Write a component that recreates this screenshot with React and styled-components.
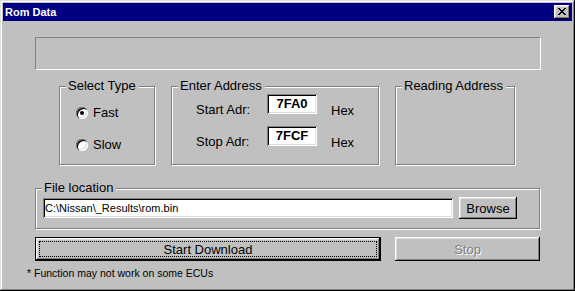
import React from "react";
import styled, { createGlobalStyle } from "styled-components";

const GlobalStyle = createGlobalStyle`
  html, body {
    margin: 0;
    padding: 0;
    background: #c0c0c0;
  }
  body {
    font-family: "Liberation Sans", Arial, sans-serif;
  }
`;

const raised = `
  box-shadow: inset -1px -1px #000, inset 1px 1px #fff,
    inset -2px -2px #808080, inset 2px 2px #dfdfdf;
`;

const sunken = `
  box-shadow: inset 1px 1px #808080, inset -1px -1px #fff,
    inset 2px 2px #000, inset -2px -2px #dfdfdf;
`;

const Window = styled.div`
  width: 575px;
  height: 291px;
  box-sizing: border-box;
  padding: 3px;
  background: #c0c0c0;
  box-shadow: inset -1px -1px #000, inset 1px 1px #dfdfdf,
    inset -2px -2px #808080, inset 2px 2px #fff;
  display: flex;
  flex-direction: column;
  font-family: "Liberation Sans", Arial, sans-serif;
  font-size: 13px;
  color: #000;
`;

const TitleBar = styled.div`
  height: 18px;
  flex: none;
  background: #000080;
  color: #fff;
  display: flex;
  align-items: center;
  justify-content: space-between;
  padding: 0 2px;
  font-weight: bold;
  font-size: 11px;
`;

const CloseButton = styled.div`
  width: 16px;
  height: 14px;
  background: #c0c0c0;
  ${raised}
  display: flex;
  align-items: center;
  justify-content: center;
  padding: 0 1px 1px 0;
  box-sizing: border-box;
`;

const Body = styled.div`
  flex: 1;
  display: flex;
  flex-direction: column;
  padding: 16px 0 0 32px;
`;

const StatusBox = styled.div`
  width: 506px;
  height: 33px;
  box-sizing: border-box;
  border: 1px solid;
  border-color: #808080 #fff #fff #808080;
`;

const GroupRow = styled.div`
  display: flex;
  gap: 16px;
  margin-top: 9px;
  padding-left: 24px;
`;

const Group = styled.fieldset`
  width: ${(p) => p.$width}px;
  height: ${(p) => p.$height}px;
  box-sizing: border-box;
  margin: ${(p) => p.$mt || 0}px 0 0 0;
  padding: 0;
  min-inline-size: 0;
  border: 1px solid #808080;
  box-shadow: inset 1px 1px #fff, 1px 1px #fff;
`;

const Legend = styled.legend`
  margin-left: 6px;
  padding: 0 3px 0 2px;
  line-height: 14px;
  font-size: 13px;
  background: #c0c0c0;
`;

const RadioList = styled.div`
  display: flex;
  flex-direction: column;
  gap: 18px;
  padding: 13px 0 0 16px;
`;

const RadioRow = styled.label`
  display: flex;
  align-items: center;
  gap: 5px;
  line-height: 14px;
`;

const RadioDot = styled.span`
  position: relative;
  width: 12px;
  height: 12px;
  border-radius: 50%;
  background: #fff;
  box-shadow: inset 1px 1px 0 #808080, inset 2px 2px 0 #000,
    inset -1px -1px 0 #fff, inset -2px -2px 0 #dfdfdf;
  &::after {
    content: "";
    display: ${(p) => (p.$checked ? "block" : "none")};
    position: absolute;
    left: 4px;
    top: 4px;
    width: 4px;
    height: 4px;
    border-radius: 50%;
    background: #000;
  }
`;

const AddrGrid = styled.div`
  display: grid;
  grid-template-columns: 71px 50px auto;
  grid-template-rows: 32px 32px;
  padding: 1px 0 0 24px;
`;

const AddrLabel = styled.span`
  line-height: 14px;
  margin-top: ${(p) => p.$top}px;
  margin-left: ${(p) => p.$left || 0}px;
`;

const AddrBox = styled.div`
  width: 50px;
  height: 20px;
  box-sizing: border-box;
  background: #fff;
  ${sunken}
  font-weight: bold;
  font-size: 13px;
  line-height: 20px;
  text-align: center;
`;

const FileRow = styled.div`
  display: flex;
  align-items: flex-start;
  gap: 6px;
  padding: 2px 0 0 7px;
`;

const PathField = styled.div`
  width: 410px;
  height: 20px;
  margin-top: 1px;
  box-sizing: border-box;
  background: #fff;
  ${sunken}
  font-size: 11px;
  line-height: 20px;
  padding-left: 2px;
`;

const Button = styled.div`
  position: relative;
  width: ${(p) => p.$width}px;
  height: ${(p) => p.$height}px;
  box-sizing: border-box;
  background: #c0c0c0;
  display: flex;
  align-items: center;
  justify-content: center;
  font-size: 13px;
  color: ${(p) => (p.$disabled ? "#808080" : "#000")};
  text-shadow: ${(p) => (p.$disabled ? "1px 1px 0 #fff" : "none")};
  ${(p) => (p.$default ? "border: 1px solid #000;" : "")}
  ${raised}
  ${(p) =>
    p.$default
      ? `&::after {
    content: "";
    position: absolute;
    inset: 3px;
    border: 1px dotted #000;
  }`
      : ""}
`;

const ButtonRow = styled.div`
  display: flex;
  gap: 14px;
  margin-top: 8px;
`;

const Footnote = styled.div`
  margin: 5px 0 0 -8px;
  font-size: 10.5px;
  line-height: 14px;
`;

function CloseIcon() {
  return (
    <svg width="8" height="7" viewBox="0 0 8 7" shapeRendering="crispEdges">
      <path
        d="M0 0h2v1h-2zM6 0h2v1h-2zM1 1h2v1h-2zM5 1h2v1h-2zM2 2h4v1h-4zM3 3h2v1h-2zM2 4h4v1h-4zM1 5h2v1h-2zM5 5h2v1h-2zM0 6h2v1h-2zM6 6h2v1h-2z"
        fill="#000"
      />
    </svg>
  );
}

function Radio({ label, checked }) {
  return (
    <RadioRow>
      <RadioDot $checked={checked} />
      {label}
    </RadioRow>
  );
}

export default function App() {
  return (
    <>
      <GlobalStyle />
      <Window>
        <TitleBar>
          <span>Rom Data</span>
          <CloseButton>
            <CloseIcon />
          </CloseButton>
        </TitleBar>
        <Body>
          <StatusBox />
          <GroupRow>
            <Group $width={96} $height={86}>
              <Legend>Select Type</Legend>
              <RadioList>
                <Radio label="Fast" checked />
                <Radio label="Slow" />
              </RadioList>
            </Group>
            <Group $width={208} $height={86}>
              <Legend>Enter Address</Legend>
              <AddrGrid>
                <AddrLabel $top={9}>Start Adr:</AddrLabel>
                <AddrBox>7FA0</AddrBox>
                <AddrLabel $top={10} $left={14}>Hex</AddrLabel>
                <AddrLabel $top={9}>Stop Adr:</AddrLabel>
                <AddrBox>7FCF</AddrBox>
                <AddrLabel $top={10} $left={14}>Hex</AddrLabel>
              </AddrGrid>
            </Group>
            <Group $width={120} $height={86}>
              <Legend>Reading Address</Legend>
            </Group>
          </GroupRow>
          <Group $width={505} $height={48} $mt={16}>
            <Legend>File location</Legend>
            <FileRow>
              <PathField>C:\Nissan\_Results\rom.bin</PathField>
              <Button $width={58} $height={22}>Browse</Button>
            </FileRow>
          </Group>
          <ButtonRow>
            <Button $width={346} $height={24} $default>
              Start Download
            </Button>
            <Button $width={145} $height={24} $disabled>
              Stop
            </Button>
          </ButtonRow>
          <Footnote>* Function may not work on some ECUs</Footnote>
        </Body>
      </Window>
    </>
  );
}
